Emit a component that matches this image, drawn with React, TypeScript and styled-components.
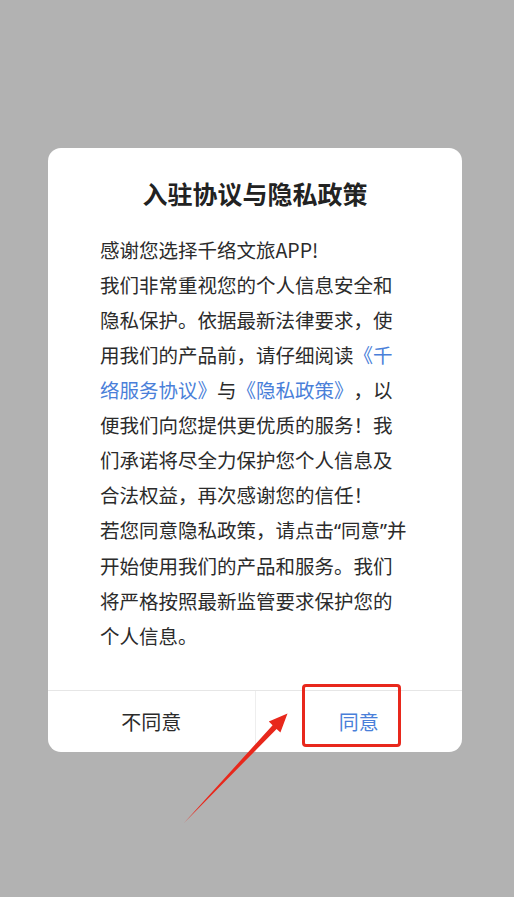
import React from "react";
import styled, { createGlobalStyle } from "styled-components";

const GlobalStyle = createGlobalStyle`
  html, body {
    margin: 0;
    padding: 0;
    background: #b2b2b2;
  }
  body {
    font-family: "Noto Sans CJK SC", "Noto Sans", sans-serif;
  }
`;

const Page = styled.div`
  position: relative;
  width: 514px;
  height: 897px;
  padding-top: 148px;
  box-sizing: border-box;
  background: #b2b2b2;
  overflow: hidden;
`;

const Dialog = styled.div`
  width: 414px;
  margin-left: 48px;
  background: #fff;
  border-radius: 13px;
`;

const Title = styled.h2`
  margin: 0;
  padding-top: 27px;
  font-size: 25px;
  line-height: 36px;
  font-weight: 700;
  color: #222;
  text-align: center;
`;

const Content = styled.div`
  margin-top: 21px;
  padding: 0 54px 37px 52px;
  font-size: 19.5px;
  line-height: 35px;
  color: #2b2b2b;
  word-break: break-all;
  text-spacing-trim: space-all;
`;

const Link = styled.span`
  color: #4a7fd9;
`;

const Quote = styled.span`
  font-family: "Noto Sans", "Liberation Sans", sans-serif;
`;

const Footer = styled.div`
  display: flex;
  height: 61px;
  border-top: 1px solid #e6e6e6;
`;

const Action = styled.div<{ $primary?: boolean }>`
  position: relative;
  flex: 1;
  display: flex;
  align-items: center;
  justify-content: center;
  font-size: 20px;
  color: ${(p) => (p.$primary ? "#4a7fd9" : "#2b2b2b")};
  & + & {
    border-left: 1px solid #eeeeee;
  }
`;

const Highlight = styled.div`
  position: absolute;
  left: 46px;
  top: -7px;
  width: 99px;
  height: 63px;
  box-sizing: border-box;
  border: 3px solid #e8281c;
  border-radius: 4px;
`;

const ArrowLayer = styled.svg`
  position: absolute;
  left: 0;
  top: 0;
  pointer-events: none;
`;

const App: React.FC = () => {
  return (
    <>
      <GlobalStyle />
      <Page>
        <Dialog>
          <Title>入驻协议与隐私政策</Title>
          <Content>
            感谢您选择千络文旅APP!
            <br />
            我们非常重视您的个人信息安全和隐私保护。依据最新法律要求，使用我们的产品前，请仔细阅读
            <Link>《千络服务协议》</Link>与<Link>《隐私政策》</Link>
            ，以便我们向您提供更优质的服务！我们承诺将尽全力保护您个人信息及合法权益，再次感谢您的信任！
            <br />
            若您同意隐私政策，请点击<Quote>“</Quote>同意<Quote>”</Quote>
            并开始使用我们的产品和服务。我们将严格按照最新监管要求保护您的个人信息。
          </Content>
          <Footer>
            <Action>不同意</Action>
            <Action $primary>
              同意
              <Highlight />
            </Action>
          </Footer>
        </Dialog>
        <ArrowLayer width="514" height="897" viewBox="0 0 514 897">
          <polygon
            points="184,823 272.6,725.2 268.8,721.6 287.5,713.5 280.4,732.6 276.6,729"
            fill="#e8281c"
          />
        </ArrowLayer>
      </Page>
    </>
  );
};

export default App;
